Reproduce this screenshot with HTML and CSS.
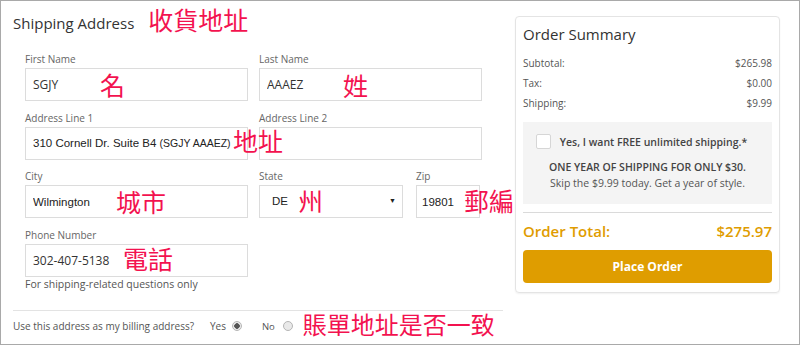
FILE: index.html
```html
<!DOCTYPE html>
<html lang="en">
<head>
  <meta charset="UTF-8" />
  <meta name="viewport" content="width=device-width, initial-scale=1.0" />
  <title>Checkout</title>
  <link rel="stylesheet" href="styles.css">
</head>
<body>
  <div class="checkout">
    <section class="shipping">
      <div class="section-head">
        <h2>Shipping Address</h2>
        <span class="note">收貨地址</span>
      </div>

      <div class="fields">
        <div class="field">
          <label>First Name</label>
          <div class="control">
            <input type="text" value="SGJY" />
            <span class="note note-first">名</span>
          </div>
        </div>
        <div class="field">
          <label>Last Name</label>
          <div class="control">
            <input type="text" value="AAAEZ" />
            <span class="note note-last">姓</span>
          </div>
        </div>

        <div class="field">
          <label>Address Line 1</label>
          <div class="control">
            <div class="input arial">310 Cornell Dr. Suite B4 <small>(SGJY AAAEZ)</small></div>
            <span class="note note-address">地址</span>
          </div>
        </div>
        <div class="field">
          <label>Address Line 2</label>
          <div class="control">
            <input type="text" value="" />
          </div>
        </div>

        <div class="field">
          <label>City</label>
          <div class="control">
            <input type="text" class="arial" value="Wilmington" />
            <span class="note note-city">城市</span>
          </div>
        </div>
        <div class="field-pair">
          <div class="field field-state">
            <label>State</label>
            <div class="control">
              <select class="arial"><option>DE</option></select>
              <span class="caret">▼</span>
              <span class="note note-state">州</span>
            </div>
          </div>
          <div class="field field-zip">
            <label>Zip</label>
            <div class="control">
              <input type="text" class="arial" value="19801" />
              <span class="note note-zip">郵編</span>
            </div>
          </div>
        </div>

        <div class="field">
          <label>Phone Number</label>
          <div class="control">
            <input type="text" value="302-407-5138" />
            <span class="note note-phone">電話</span>
          </div>
          <p class="hint">For shipping-related questions only</p>
        </div>
      </div>

      <div class="billing">
        <span class="billing-question">Use this address as my billing address?</span>
        <label class="choice choice-yes">Yes <input type="radio" name="billing" checked /></label>
        <label class="choice choice-no">No <input type="radio" name="billing" /></label>
        <span class="note note-billing">賬單地址是否一致</span>
      </div>
    </section>

    <aside class="summary">
      <h3>Order Summary</h3>
      <div class="summary-row"><span>Subtotal:</span><span>$265.98</span></div>
      <div class="summary-row"><span>Tax:</span><span>$0.00</span></div>
      <div class="summary-row"><span>Shipping:</span><span>$9.99</span></div>

      <div class="promo">
        <label class="promo-check">
          <input type="checkbox" />
          <span>Yes, I want FREE unlimited shipping.*</span>
        </label>
        <p class="promo-title">ONE YEAR OF SHIPPING FOR ONLY $30.</p>
        <p class="promo-text">Skip the $9.99 today. Get a year of style.</p>
      </div>

      <div class="total">
        <span>Order Total:</span>
        <span>$275.97</span>
      </div>
      <button class="place-order">Place Order</button>
    </aside>
  </div>
</body>
</html>
```

FILE: styles.css
```css
* {
  box-sizing: border-box;
}
body, html {
  margin: 0;
  padding: 0;
  background: #fff;
  font-family: 'Open Sans', 'Noto Sans', sans-serif;
  color: #333;
}
.checkout {
  display: flex;
  width: 800px;
  height: 345px;
  border: 1px solid #a9a9a9;
}

/* shipping column */
.shipping {
  flex: none;
  width: 502px;
  padding: 11px 0 0 12px;
}
.section-head {
  display: flex;
  align-items: flex-start;
  gap: 14px;
  height: 22px;
}
.section-head h2 {
  margin: 0;
  font-size: 15px;
  line-height: 22px;
  font-weight: 400;
  color: #333;
}
.section-head .note {
  margin-top: -4px;
}
.note {
  font-family: 'Noto Sans CJK TC', 'Noto Sans CJK SC', sans-serif;
  font-size: 25px;
  line-height: 22px;
  color: #f3124f;
  white-space: nowrap;
}
.fields {
  display: grid;
  grid-template-columns: 223px 223px;
  column-gap: 11px;
  row-gap: 9.5px;
  margin-top: 18px;
  padding-left: 12px;
}
.field label {
  display: block;
  font-size: 10px;
  line-height: 14px;
  color: #666;
  margin-bottom: 2px;
}
.control {
  position: relative;
}
.control .note {
  position: absolute;
  z-index: 1;
  line-height: 25px;
}
input[type="text"], .input, select {
  display: block;
  width: 100%;
  height: 33px;
  margin: 0;
  padding: 0 7px;
  border: 1px solid #dcdcdc;
  border-radius: 0;
  background: #fff;
  font-family: 'Open Sans', sans-serif;
  font-size: 12px;
  line-height: 31px;
  color: #333;
  outline: none;
}
.arial, input.arial {
  font-family: 'Liberation Sans', Arial, sans-serif;
  font-size: 11.5px;
  color: #222;
}
.input small {
  font-size: 10.5px;
}
select {
  appearance: none;
  -webkit-appearance: none;
  padding-left: 12px;
  font-size: 12px;
}
.caret {
  position: absolute;
  right: 7px;
  top: 12px;
  font-size: 7px;
  line-height: 8px;
  color: #222;
}
.field-pair {
  display: flex;
  gap: 13px;
}
.field-state {
  width: 144px;
}
.field-zip {
  width: 64px;
}
.field-zip input {
  padding-left: 5px;
}
.note-first { left: 75px; top: 4px; }
.note-last { left: 84px; top: 5px; }
.note-address { left: 208px; top: 1px; }
.note-city { left: 91px; top: 4px; }
.note-state { left: 39px; top: 3px; }
.note-zip { left: 48px; top: 3px; }
.note-phone { left: 98px; top: 2px; }
.hint {
  margin: 0;
  font-size: 10.5px;
  line-height: 14px;
  color: #555;
}
.billing {
  display: flex;
  align-items: center;
  height: 32px;
  margin-top: 19px;
  border-top: 1px solid #e3e3e3;
  font-size: 10px;
  color: #555;
  white-space: nowrap;
}
.billing-question {
  margin-right: 16px;
}
.choice {
  display: flex;
  align-items: center;
  gap: 6px;
}
.choice-no {
  margin-left: 20px;
  gap: 8px;
  font-size: 9.5px;
}
.choice input {
  appearance: none;
  -webkit-appearance: none;
  width: 10px;
  height: 10px;
  margin: 0;
  border: 1px solid #b5b5b5;
  border-radius: 50%;
  background: #e9e9e9;
}
.choice input:checked {
  background: radial-gradient(circle, #555 0 2.5px, #e9e9e9 3px);
}
.note-billing {
  margin-left: 10px;
  font-size: 24px;
  line-height: 24px;
  margin-top: -5px;
}

/* order summary card */
.summary {
  flex: none;
  width: 265px;
  height: 277px;
  margin: 15px 0 0 12px;
  padding: 6px 7px 0;
  border: 1px solid #e4e4e4;
  border-radius: 4px;
  box-shadow: 0 1px 2px rgba(0, 0, 0, 0.06);
}
.summary h3 {
  margin: 0 0 8px;
  font-size: 15px;
  line-height: 22px;
  font-weight: 400;
  color: #333;
}
.summary-row {
  display: flex;
  justify-content: space-between;
  font-size: 10px;
  line-height: 20px;
  color: #555;
}
.promo {
  height: 82px;
  margin-top: 9px;
  padding-top: 12px;
  background: #f4f4f4;
  text-align: center;
}
.promo-check {
  display: flex;
  justify-content: center;
  align-items: center;
  gap: 9px;
  padding-right: 12px;
  font-size: 10.5px;
  font-weight: 600;
  color: #444;
}
.promo-check input {
  appearance: none;
  -webkit-appearance: none;
  width: 15px;
  height: 15px;
  margin: 0;
  border: 1px solid #d6d6d6;
  border-radius: 2px;
  background: #fff;
}
.promo p {
  margin: 0;
  font-size: 10.5px;
  line-height: 16px;
  color: #555;
}
.promo-title {
  padding-top: 10px;
  font-weight: 600;
  color: #444 !important;
}
.total {
  display: flex;
  justify-content: space-between;
  margin-top: 8px;
  padding-top: 7px;
  border-top: 1px solid #dadada;
  font-size: 15px;
  line-height: 22px;
  font-weight: 600;
  color: #e09c00;
}
.place-order {
  display: block;
  width: 100%;
  height: 33px;
  margin-top: 8px;
  border: none;
  border-radius: 4px;
  background: #df9d00;
  color: #fff;
  font-family: 'Open Sans', sans-serif;
  font-size: 12px;
  font-weight: 700;
  cursor: pointer;
}
```
